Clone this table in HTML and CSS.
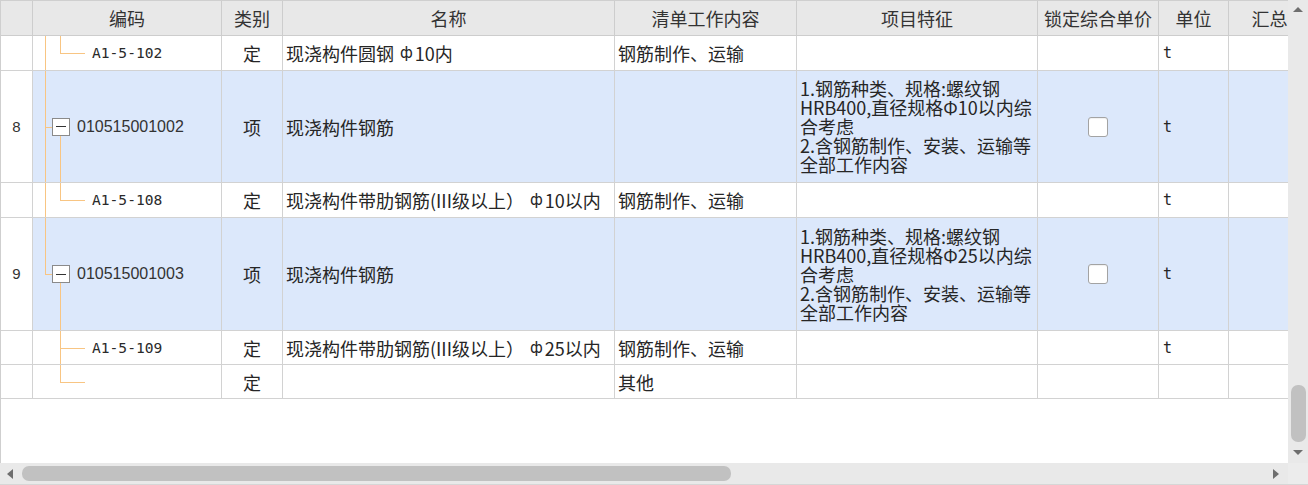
FILE: index.html
```html
<!DOCTYPE html>
<html lang="zh-CN">
<head>
<meta charset="utf-8">
<title>清单</title>
<link rel="stylesheet" href="styles.css">
</head>
<body>
<div class="app">
  <div class="main">
    <div class="viewport">
      <div class="row head">
        <div class="cell"></div>
        <div class="cell">编码</div>
        <div class="cell">类别</div>
        <div class="cell">名称</div>
        <div class="cell">清单工作内容</div>
        <div class="cell">项目特征</div>
        <div class="cell">锁定综合单价</div>
        <div class="cell">单位</div>
        <div class="cell">汇总</div>
      </div>

      <div class="row h35">
        <div class="cell num"></div>
        <div class="cell code child">
          <span class="ln vmain"></span>
          <span class="ln vsub top-half"></span>
          <span class="ln hbranch"></span>
          A1-5-102
        </div>
        <div class="cell type">定</div>
        <div class="cell txt">现浇构件圆钢 <span class="phi">ф</span>10内</div>
        <div class="cell txt">钢筋制作、运输</div>
        <div class="cell txt"></div>
        <div class="cell"></div>
        <div class="cell unit">t</div>
        <div class="cell"></div>
      </div>

      <div class="row h112 sel">
        <div class="cell num">8</div>
        <div class="cell code parent">
          <span class="ln vmain"></span>
          <span class="ln hconn"></span>
          <span class="box"></span>
          <span class="ln vsub below-box"></span>
          010515001002
        </div>
        <div class="cell type">项</div>
        <div class="cell txt">现浇构件钢筋</div>
        <div class="cell txt"></div>
        <div class="cell feat">
          <div class="fl">1.钢筋种类、规格:螺纹钢</div>
          <div class="fl">HRB400,直径规格Φ10以内综</div>
          <div class="fl">合考虑</div>
          <div class="fl">2.含钢筋制作、安装、运输等</div>
          <div class="fl">全部工作内容</div>
        </div>
        <div class="cell check"><span class="cb"></span></div>
        <div class="cell unit">t</div>
        <div class="cell"></div>
      </div>

      <div class="row h35">
        <div class="cell num"></div>
        <div class="cell code child">
          <span class="ln vmain"></span>
          <span class="ln vsub top-half"></span>
          <span class="ln hbranch"></span>
          A1-5-108
        </div>
        <div class="cell type">定</div>
        <div class="cell txt">现浇构件带肋钢筋(III级以上） <span class="phi">ф</span>10以内</div>
        <div class="cell txt">钢筋制作、运输</div>
        <div class="cell txt"></div>
        <div class="cell"></div>
        <div class="cell unit">t</div>
        <div class="cell"></div>
      </div>

      <div class="row h113 sel">
        <div class="cell num">9</div>
        <div class="cell code parent">
          <span class="ln vmain top-half"></span>
          <span class="ln hconn"></span>
          <span class="box"></span>
          <span class="ln vsub below-box"></span>
          010515001003
        </div>
        <div class="cell type">项</div>
        <div class="cell txt">现浇构件钢筋</div>
        <div class="cell txt"></div>
        <div class="cell feat">
          <div class="fl">1.钢筋种类、规格:螺纹钢</div>
          <div class="fl">HRB400,直径规格Φ25以内综</div>
          <div class="fl">合考虑</div>
          <div class="fl">2.含钢筋制作、安装、运输等</div>
          <div class="fl">全部工作内容</div>
        </div>
        <div class="cell check"><span class="cb"></span></div>
        <div class="cell unit">t</div>
        <div class="cell"></div>
      </div>

      <div class="row h34">
        <div class="cell num"></div>
        <div class="cell code child">
          <span class="ln vsub"></span>
          <span class="ln hbranch"></span>
          A1-5-109
        </div>
        <div class="cell type">定</div>
        <div class="cell txt">现浇构件带肋钢筋(III级以上） <span class="phi">ф</span>25以内</div>
        <div class="cell txt">钢筋制作、运输</div>
        <div class="cell txt"></div>
        <div class="cell"></div>
        <div class="cell unit">t</div>
        <div class="cell"></div>
      </div>

      <div class="row h34">
        <div class="cell num"></div>
        <div class="cell code child">
          <span class="ln vsub top-half"></span>
          <span class="ln hbranch"></span>
        </div>
        <div class="cell type">定</div>
        <div class="cell txt"></div>
        <div class="cell txt">其他</div>
        <div class="cell txt"></div>
        <div class="cell"></div>
        <div class="cell unit"></div>
        <div class="cell"></div>
      </div>
    </div>
    <div class="vscroll">
      <span class="arrow up"></span>
      <span class="spacer"></span>
      <span class="vthumb"></span>
      <span class="arrow down"></span>
    </div>
  </div>
  <div class="bottom">
    <div class="hscroll">
      <span class="arrow left"></span>
      <span class="hthumb"></span>
      <span class="spacer"></span>
      <span class="arrow right"></span>
    </div>
    <div class="corner"></div>
  </div>
</div>
</body>
</html>
```
FILE: styles.css
```css
* { box-sizing: border-box; }
html, body { margin: 0; padding: 0; background: #fff; }
body {
  font-family: "Noto Sans CJK SC", sans-serif;
  font-size: 18px;
  color: #262626;
}
.app { width: 1308px; height: 485px; display: flex; flex-direction: column; overflow: hidden; }
.main { display: flex; height: 463px; }
.viewport {
  width: 1288px;
  height: 463px;
  overflow: hidden;
  border-left: 1px solid #cfcfcf;
  border-top: 1px solid #cfcfcf;
  background: #fff;
}
.row {
  display: grid;
  grid-template-columns: 32px 189px 61px 332px 182px 241px 121px 70px 82px;
  width: 1310px;
}
.cell {
  border-right: 1px solid #d2d2d2;
  border-bottom: 1px solid #d2d2d2;
  display: flex;
  align-items: center;
  white-space: nowrap;
  overflow: hidden;
  line-height: 20px;
}
.head { height: 35px; background: #e8e8e8; }
.head .cell { justify-content: center; color: #333; border-color: #cdcdcd; }
.h35 { height: 35px; }
.h34 { height: 34px; }
.h112 { height: 112px; }
.h113 { height: 113px; }
.sel .cell { background: #dce8fb; }
.sel .cell.num { background: #fff; }
.num {
  justify-content: center;
  font-family: "Liberation Sans", sans-serif;
  font-size: 15px;
  color: #333;
}
.code { position: relative; }
.code.child {
  padding-left: 59px;
  font-family: "DejaVu Sans Mono", monospace;
  font-size: 14.6px;
  color: #2a2a2a;
}
.code.parent {
  padding-left: 44px;
  font-family: "Liberation Sans", sans-serif;
  font-size: 16px;
  color: #333;
}
.ln { position: absolute; background: #f8c583; }
.vmain { left: 12px; top: 0; bottom: -1px; width: 1px; }
.vmain.top-half { bottom: auto; height: 50%; }
.vsub { left: 27px; top: 0; bottom: -1px; width: 1px; }
.vsub.top-half { bottom: auto; height: 50%; }
.vsub.below-box { top: calc(50% + 9px); }
.hbranch { left: 27px; width: 25px; top: 50%; height: 1px; }
.hconn { left: 12px; width: 7px; top: 50%; height: 1px; }
.box {
  position: absolute;
  left: 19px;
  top: calc(50% - 9px);
  width: 18px;
  height: 18px;
  border: 1px solid #8a8a8a;
  background: #fff;
  display: flex;
  align-items: center;
  justify-content: center;
}
.box::after { content: ""; width: 10px; height: 1px; background: #333; }
.type { justify-content: center; }
.txt { padding-left: 3px; }
.phi { font-family: "DejaVu Sans", sans-serif; font-size: 15px; margin: 0 2px 0 6px; }
.feat {
  padding-left: 3px;
  flex-direction: column;
  align-items: flex-start;
  justify-content: center;
}
.fl { height: 19px; line-height: 19px; }
.check { justify-content: center; }
.cb {
  width: 20px;
  height: 20px;
  border: 1px solid #a3a3a3;
  border-radius: 3px;
  background: #fff;
  box-shadow: inset 0 1px 1px rgba(0,0,0,0.06);
}
.unit {
  padding-left: 4px;
  font-family: "DejaVu Sans Mono", monospace;
  font-size: 15px;
}
.vscroll {
  width: 20px;
  height: 463px;
  background: #e9e9e9;
  display: flex;
  flex-direction: column;
  align-items: center;
  padding: 7px 0 8px;
}
.spacer { flex: 1; }
.vthumb {
  width: 15px;
  height: 57px;
  border-radius: 7px;
  background: #c1c1c1;
  margin-bottom: 8px;
}
.arrow { width: 0; height: 0; display: block; }
.arrow.up { border-left: 5px solid transparent; border-right: 5px solid transparent; border-bottom: 5px solid #6e6e6e; }
.arrow.down { border-left: 5px solid transparent; border-right: 5px solid transparent; border-top: 5px solid #6e6e6e; }
.bottom { display: flex; height: 22px; }
.hscroll {
  width: 1288px;
  height: 22px;
  background: #e9e9e9;
  display: flex;
  align-items: center;
  padding: 0 9px 0 7px;
  border-bottom: 1px solid #d6d6d6;
}
.hthumb {
  width: 709px;
  height: 15px;
  border-radius: 7px;
  background: #c1c1c1;
  margin-left: 9px;
}
.arrow.left { border-top: 5px solid transparent; border-bottom: 5px solid transparent; border-right: 6px solid #6e6e6e; }
.arrow.right { border-top: 5px solid transparent; border-bottom: 5px solid transparent; border-left: 6px solid #6e6e6e; }
.corner { width: 20px; height: 22px; background: #ececec; border-bottom: 1px solid #d6d6d6; }
```
